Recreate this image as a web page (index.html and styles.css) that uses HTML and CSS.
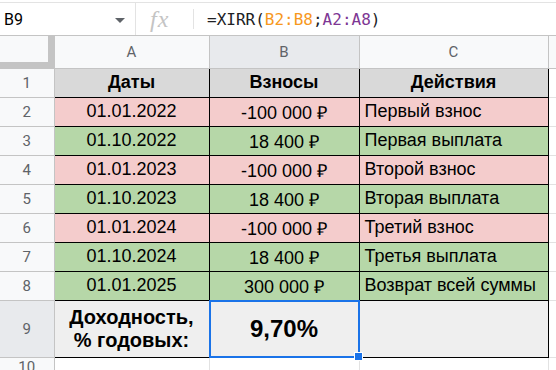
FILE: index.html
```html
<!DOCTYPE html>
<html lang="ru">
<head>
<meta charset="utf-8">
<link rel="stylesheet" href="styles.css">
</head>
<body>
<div class="fbar">
  <div class="namebox"><span class="ref">B9</span><span class="caret"></span></div>
  <div class="fx">fx</div>
  <div class="formula">=XIRR(<span class="o">B2:B8</span>;<span class="p">A2:A8</span>)</div>
</div>
<table class="sheet">
  <colgroup><col class="c0"><col class="ca"><col class="cb"><col class="cc"><col class="cd"></colgroup>
  <tr class="colhead">
    <th class="corner"></th><th>A</th><th class="sel">B</th><th>C</th><th class="dcol"></th>
  </tr>
  <tr class="r">
    <th class="rh">1</th><td class="hd">Даты</td><td class="hd">Взносы</td><td class="hd">Действия</td><td class="blank"></td>
  </tr>
  <tr class="r">
    <th class="rh">2</th><td class="pk ctr">01.01.2022</td><td class="pk ctr">-100 000 ₽</td><td class="pk">Первый взнос</td><td class="blank"></td>
  </tr>
  <tr class="r">
    <th class="rh">3</th><td class="gr ctr">01.10.2022</td><td class="gr ctr">18 400 ₽</td><td class="gr">Первая выплата</td><td class="blank"></td>
  </tr>
  <tr class="r">
    <th class="rh">4</th><td class="pk ctr">01.01.2023</td><td class="pk ctr">-100 000 ₽</td><td class="pk">Второй взнос</td><td class="blank"></td>
  </tr>
  <tr class="r">
    <th class="rh">5</th><td class="gr ctr">01.10.2023</td><td class="gr ctr">18 400 ₽</td><td class="gr">Вторая выплата</td><td class="blank"></td>
  </tr>
  <tr class="r">
    <th class="rh">6</th><td class="pk ctr">01.01.2024</td><td class="pk ctr">-100 000 ₽</td><td class="pk">Третий взнос</td><td class="blank"></td>
  </tr>
  <tr class="r">
    <th class="rh">7</th><td class="gr ctr">01.10.2024</td><td class="gr ctr">18 400 ₽</td><td class="gr">Третья выплата</td><td class="blank"></td>
  </tr>
  <tr class="r">
    <th class="rh">8</th><td class="gr ctr">01.01.2025</td><td class="gr ctr">300 000 ₽</td><td class="gr">Возврат всей суммы</td><td class="blank"></td>
  </tr>
  <tr class="r9">
    <th class="rh sel">9</th><td class="g9 label">Доходность,<br>% годовых:</td><td class="g9 result"><div class="selbox">9,70%<span class="handle"></span></div></td><td class="g9"></td><td class="blank"></td>
  </tr>
  <tr class="r10">
    <th class="rh">10</th><td class="empty"></td><td class="empty"></td><td class="empty"></td><td class="blank"></td>
  </tr>
</table>
</body>
</html>
```
FILE: styles.css
```css
html, body {
  margin: 0;
  padding: 0;
  background: #ffffff;
  overflow: hidden;
}
body {
  width: 556px;
  height: 370px;
  font-family: "Liberation Sans", Arial, sans-serif;
}
.fbar {
  margin-top: 2px;
  border-top: 1px solid #e3e3e3;
  border-bottom: 1px solid #c4c4c4;
  height: 32px;
  display: flex;
  align-items: center;
  background: #fff;
}
.namebox {
  height: 32px;
  display: flex;
  align-items: center;
  justify-content: space-between;
  border-right: 1px solid #e3e3e3;
  padding: 0 10px 0 4px;
  box-sizing: border-box;
  width: 136px;
}
.ref {
  font-family: Roboto, "Liberation Sans", sans-serif;
  font-size: 16px;
  color: #000;
}
.caret {
  width: 0;
  height: 0;
  border-left: 5px solid transparent;
  border-right: 5px solid transparent;
  border-top: 5px solid #5f6368;
  margin-top: 2px;
}
.fx {
  width: 58px;
  height: 20px;
  line-height: 20px;
  border-right: 1px solid #e3e3e3;
  box-sizing: border-box;
  padding-left: 14px;
  font-family: "Liberation Serif", serif;
  font-style: italic;
  font-size: 24px;
  color: #c4c4c4;
  letter-spacing: 1px;
}
.formula {
  padding-left: 13px;
  font-family: "DejaVu Sans Mono", monospace;
  font-size: 16px;
  color: #202124;
}
.formula .o { color: #f7981d; }
.formula .p { color: #7e3794; }

.sheet {
  border-collapse: collapse;
  table-layout: fixed;
  width: 566px;
}
.c0 { width: 54px; }
.ca { width: 155px; }
.cb { width: 150px; }
.cc { width: 189px; }
.cd { width: 18px; }

.sheet th, .sheet td {
  padding: 0;
  box-sizing: border-box;
}
.colhead th {
  height: 32px;
  background: #f8f9fa;
  border-right: 1px solid #c4c4c4;
  border-bottom: 1px solid #c4c4c4;
  font-family: Roboto, "Liberation Sans", sans-serif;
  font-weight: normal;
  font-size: 15px;
  color: #5f6368;
}
.colhead th.sel {
  background: #e8eaed;
}
.colhead th.corner {
  background: #f8f9fa;
  box-shadow: inset -6px -6px 0 #c4c4c4;
  border-right: 1px solid #c4c4c4;
}
.colhead th.dcol {
  border-right: none;
}
.rh {
  background: #f8f9fa;
  border-right: 1px solid #c4c4c4;
  border-bottom: 1px solid #c4c4c4;
  font-family: Roboto, "Liberation Sans", sans-serif;
  font-weight: normal;
  font-size: 15px;
  color: #5f6368;
  text-align: center;
}
.rh.sel {
  background: #e8eaed;
}
.r th, .r td {
  height: 29px;
}
.r td {
  border: 1px solid #000;
  font-size: 18px;
  color: #000;
  padding-left: 5px;
  white-space: nowrap;
  overflow: hidden;
}
.r td.ctr {
  text-align: center;
  padding-left: 0;
}
.hd {
  background: #d9d9d9;
  font-weight: bold;
  text-align: center;
  padding-left: 0 !important;
}
.pk { background: #f4cccc; }
.gr { background: #b6d7a8; }
.r td.blank, .r9 td.blank, .r10 td.blank {
  border: none;
  border-bottom: 1px solid #e2e2e2;
  background: #fff;
}
.r9 th, .r9 td {
  height: 57px;
}
.r9 td.g9 {
  background: #efefef;
  border: 1px solid #000;
}
.label {
  font-weight: bold;
  font-size: 20px;
  text-align: center;
  line-height: 23px;
}
.result {
  position: relative;
}
.selbox {
  position: absolute;
  left: -1px;
  top: -1px;
  right: -1px;
  bottom: -1px;
  border: 2px solid #1a73e8;
  display: flex;
  align-items: center;
  justify-content: center;
  font-weight: bold;
  font-size: 24px;
}
.handle {
  position: absolute;
  right: -5px;
  bottom: -5px;
  width: 7px;
  height: 7px;
  background: #1a73e8;
  border: 1px solid #fff;
}
.r10 th, .r10 td {
  height: 20px;
}
.r10 td.empty {
  border-right: 1px solid #e2e2e2;
}
```
